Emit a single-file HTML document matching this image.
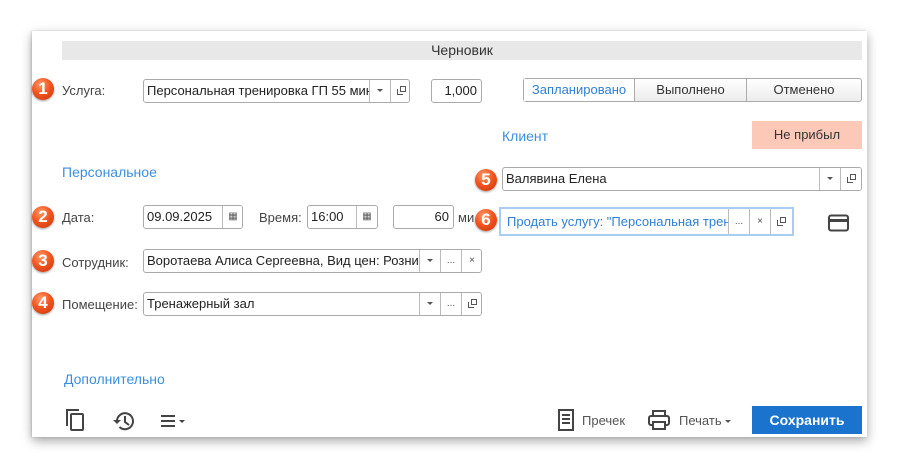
<!DOCTYPE html>
<html><head><meta charset="utf-8"><style>
*{box-sizing:border-box;margin:0;padding:0}
body{width:900px;height:470px;background:#fff;font-family:"Liberation Sans",Arial,sans-serif;font-size:13px;color:#333;position:relative;overflow:hidden}
#panel{position:absolute;left:32px;top:31px;width:835px;height:406px;background:#fff;box-shadow:0 4px 10px rgba(0,0,0,.35),-1px 0 2px rgba(0,0,0,.15)}
.a{position:absolute}
.lbl{position:absolute;color:#444;font-size:13px;line-height:16px}
.inp{position:absolute;border:1px solid #aaa;border-radius:3px;background:#fff;height:24px;overflow:hidden;white-space:nowrap;line-height:22px;padding-left:3px;color:#222}
.btn{position:absolute;top:0;bottom:0;width:21px;border-left:1px solid #bbb;text-align:center;color:#555;font-size:10px;line-height:22px;background:#fff}
.badge{position:absolute;width:22px;height:22px;border-radius:50%;background:radial-gradient(circle at 40% 30%,#ff9a6a 0,#f2551f 45%,#c8320a 100%);color:#fff;font-weight:bold;font-size:17px;text-align:center;line-height:22px;box-shadow:0 1px 2px rgba(0,0,0,.4)}
.link{position:absolute;color:#3b8fe0;font-size:14px}
.tri{display:inline-block;width:0;height:0;border-left:3px solid transparent;border-right:3px solid transparent;border-top:3px solid #555;vertical-align:middle}
.cp{display:inline-block;width:9px;height:9px;position:relative;vertical-align:middle}
.cp:before{content:"";position:absolute;left:3px;top:0;width:6px;height:6px;border:1px solid #555;box-sizing:border-box}
.cp:after{content:"";position:absolute;left:0;top:3px;width:6px;height:6px;border-left:1px solid #555;border-bottom:1px solid #555;box-sizing:border-box}
</style></head><body>
<div id="panel"></div>
<div class="a" style="left:62px;top:41px;width:800px;height:19px;background:#e8e8e8;text-align:center;line-height:19px;color:#333;font-size:14px">Черновик</div>

<div class="badge" style="left:32px;top:78px">1</div>
<div class="lbl" style="left:62px;top:83px">Услуга:</div>
<div class="inp" style="left:143px;top:79px;width:267px">Персональная тренировка ГП 55 мин
 <div class="btn" style="left:225px"><span class="tri"></span></div><div class="btn" style="left:246px"><span class="cp"></span></div></div>
<div class="inp" style="left:431px;top:79px;width:51px;text-align:right;padding-right:4px">1,000</div>

<div class="a" style="left:523px;top:78px;width:339px;height:24px;border:1px solid #aaa;border-radius:3px;background:linear-gradient(#fff,#ececec);line-height:22px;text-align:center">
 <div class="a" style="left:0;top:0;width:110px;background:#fff;color:#2f7fd6;height:22px">Запланировано</div>
 <div class="a" style="left:110px;top:0;width:112px;border-left:1px solid #aaa;height:22px">Выполнено</div>
 <div class="a" style="left:222px;top:0;width:115px;border-left:1px solid #aaa;height:22px">Отменено</div>
</div>

<div class="link" style="left:502px;top:128px">Клиент</div>
<div class="a" style="left:752px;top:121px;width:110px;height:28px;background:#fcc9b9;text-align:center;line-height:28px;color:#333">Не прибыл</div>

<div class="link" style="left:62px;top:164px">Персональное</div>

<div class="badge" style="left:475px;top:169px">5</div>
<div class="inp" style="left:502px;top:167px;width:360px">Валявина Елена
 <div class="btn" style="left:316px"><span class="tri"></span></div><div class="btn" style="left:337px"><span class="cp"></span></div></div>

<div class="badge" style="left:32px;top:206px">2</div>
<div class="lbl" style="left:62px;top:210px">Дата:</div>
<div class="inp" style="left:143px;top:205px;width:100px">09.09.2025<div class="btn" style="left:78px">&#9638;</div></div>
<div class="lbl" style="left:259px;top:210px">Время:</div>
<div class="inp" style="left:307px;top:205px;width:71px">16:00<div class="btn" style="left:48px">&#9638;</div></div>
<div class="inp" style="left:393px;top:205px;width:61px;text-align:right;padding-right:4px">60</div>
<div class="lbl" style="left:458px;top:210px">ми</div>

<div class="badge" style="left:475px;top:209px">6</div>
<div class="a" style="left:499px;top:207px;width:295px;height:29px;border:2px solid #a9cdf2;background:#fff;overflow:hidden;white-space:nowrap;line-height:25px;padding-left:6px;color:#2f7fd6">Продать услугу: "Персональная трен
 <div class="btn" style="left:227px;border-left:1px solid #bbb;line-height:25px">...</div><div class="btn" style="left:248px;line-height:25px">×</div><div class="btn" style="left:269px;line-height:25px"><span class="cp"></span></div></div>
<svg class="a" style="left:828px;top:214px" width="21" height="18"><rect x="1" y="1.5" width="19" height="15" rx="2" fill="none" stroke="#444" stroke-width="2"/><rect x="1" y="5" width="19" height="3" fill="#444"/></svg>

<div class="badge" style="left:32px;top:250px">3</div>
<div class="lbl" style="left:62px;top:255px">Сотрудник:</div>
<div class="inp" style="left:143px;top:249px;width:339px">Воротаева Алиса Сергеевна, Вид цен: Розница
 <div class="btn" style="left:275px"><span class="tri"></span></div><div class="btn" style="left:296px">...</div><div class="btn" style="left:317px">×</div></div>

<div class="badge" style="left:32px;top:292px">4</div>
<div class="lbl" style="left:62px;top:297px">Помещение:</div>
<div class="inp" style="left:143px;top:292px;width:339px">Тренажерный зал
 <div class="btn" style="left:275px"><span class="tri"></span></div><div class="btn" style="left:296px">...</div><div class="btn" style="left:317px"><span class="cp"></span></div></div>

<div class="link" style="left:64px;top:371px">Дополнительно</div>

<svg class="a" style="left:65px;top:408px" width="22" height="24"><path d="M2 18V2h12" fill="none" stroke="#444" stroke-width="2"/><rect x="6" y="6" width="12" height="16" rx="1" fill="none" stroke="#444" stroke-width="2"/></svg>
<svg class="a" style="left:112px;top:410px" width="24" height="22"><path d="M5 11a8 8 0 1 1 2.5 6" fill="none" stroke="#444" stroke-width="2"/><path d="M1 10l4 4 4-4z" fill="#444"/><path d="M13 6v6l4 3" fill="none" stroke="#444" stroke-width="2"/></svg>
<svg class="a" style="left:160px;top:414px" width="28" height="14"><path d="M1 2h14M1 7h14M1 12h14" stroke="#444" stroke-width="2"/><path d="M19 6h6l-3 3z" fill="#444"/></svg>

<svg class="a" style="left:557px;top:408px" width="18" height="24"><rect x="2" y="2" width="14" height="20" fill="none" stroke="#444" stroke-width="2"/><path d="M5 7h8M5 11h8M5 15h8" stroke="#444" stroke-width="2"/></svg>
<div class="lbl" style="left:582px;top:413px;color:#555">Пречек</div>
<svg class="a" style="left:648px;top:409px" width="22" height="22"><rect x="5" y="2" width="12" height="5" fill="none" stroke="#444" stroke-width="2"/><rect x="1" y="7" width="20" height="9" rx="2" fill="none" stroke="#444" stroke-width="2"/><rect x="5" y="13" width="12" height="7" fill="#fff" stroke="#444" stroke-width="2"/></svg>
<div class="lbl" style="left:679px;top:413px;color:#555">Печать <span class="tri"></span></div>
<div class="a" style="left:752px;top:406px;width:110px;height:28px;background:#1a73cc;color:#fff;font-weight:bold;font-size:14px;text-align:center;line-height:28px">Сохранить</div>
</body></html>
